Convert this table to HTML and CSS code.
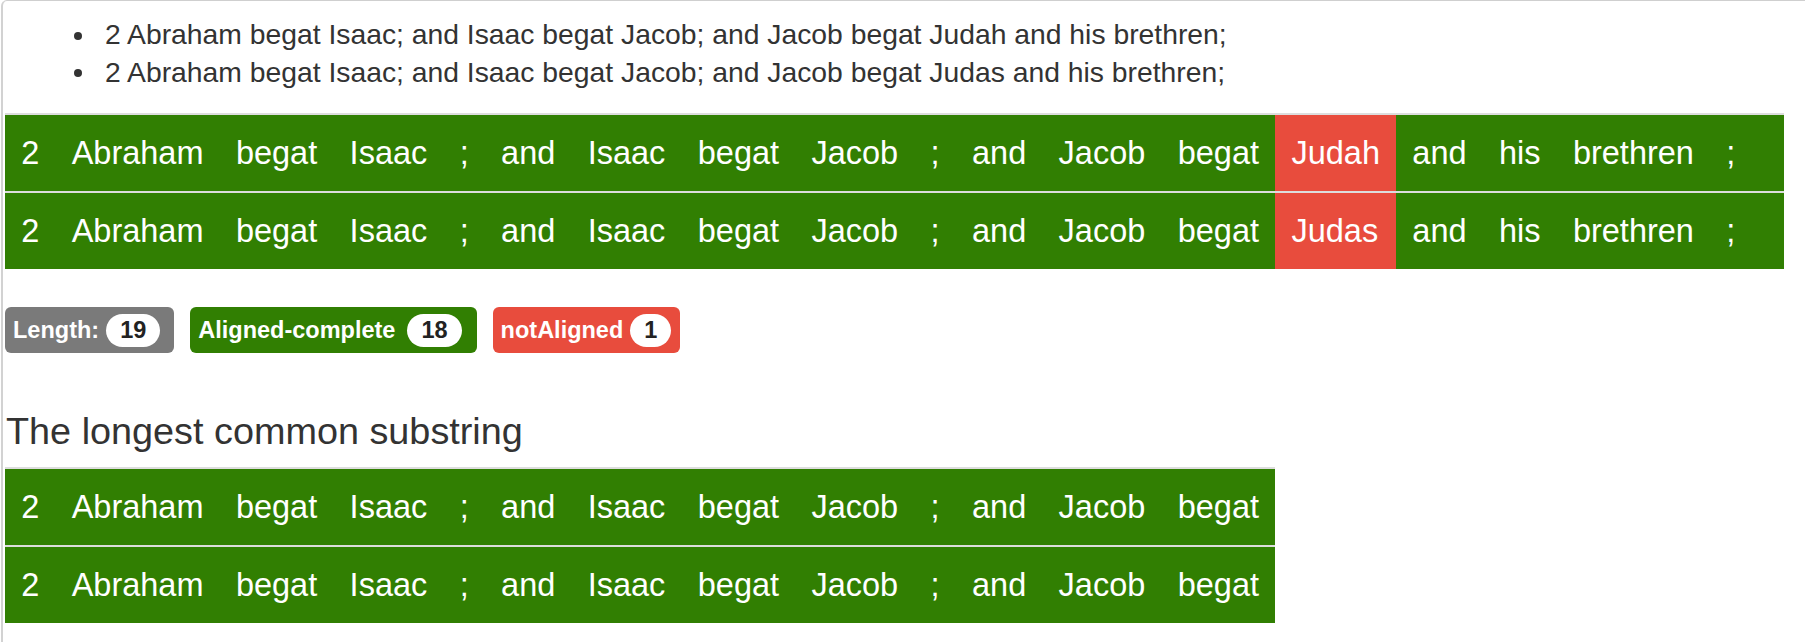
FILE: index.html
```html
<!DOCTYPE html>
<html lang="en">
<head>
<meta charset="utf-8">
<title>Alignment</title>
<link rel="stylesheet" href="styles.css">
</head>
<body>
<div class="frame">
  <ul class="verses">
    <li>2 Abraham begat Isaac; and Isaac begat Jacob; and Jacob begat Judah and his brethren;</li>
    <li>2 Abraham begat Isaac; and Isaac begat Jacob; and Jacob begat Judas and his brethren;</li>
  </ul>

  <table class="align">
    <tr>
      <td>2</td><td>Abraham</td><td>begat</td><td>Isaac</td><td>;</td><td>and</td><td>Isaac</td><td>begat</td><td>Jacob</td><td>;</td><td>and</td><td>Jacob</td><td>begat</td><td class="miss">Judah</td><td>and</td><td>his</td><td>brethren</td><td>;</td><td></td>
    </tr>
    <tr>
      <td>2</td><td>Abraham</td><td>begat</td><td>Isaac</td><td>;</td><td>and</td><td>Isaac</td><td>begat</td><td>Jacob</td><td>;</td><td>and</td><td>Jacob</td><td>begat</td><td class="miss">Judas</td><td>and</td><td>his</td><td>brethren</td><td>;</td><td></td>
    </tr>
  </table>

  <div class="labels">
    <span class="label label-gray">Length: <span class="pill">19</span></span>
    <span class="label label-green">Aligned-complete <span class="pill">18</span></span>
    <span class="label label-red">notAligned <span class="pill">1</span></span>
  </div>

  <h3 class="title">The longest common substring</h3>

  <table class="align">
    <tr>
      <td>2</td><td>Abraham</td><td>begat</td><td>Isaac</td><td>;</td><td>and</td><td>Isaac</td><td>begat</td><td>Jacob</td><td>;</td><td>and</td><td>Jacob</td><td>begat</td>
    </tr>
    <tr>
      <td>2</td><td>Abraham</td><td>begat</td><td>Isaac</td><td>;</td><td>and</td><td>Isaac</td><td>begat</td><td>Jacob</td><td>;</td><td>and</td><td>Jacob</td><td>begat</td>
    </tr>
  </table>
</div>
</body>
</html>
```

FILE: styles.css
```css
html, body {
  margin: 0;
  padding: 0;
  background: #ffffff;
}

body {
  font-family: "Liberation Sans", Arial, Helvetica, sans-serif;
  color: #333333;
}

.frame {
  margin-left: 1px;
  min-height: 642px;
  border-top: 1px solid #cfcfcf;
  border-left: 2px solid #d2d2d2;
  border-top-left-radius: 6px;
  padding-left: 2px;
  box-sizing: border-box;
}

.verses {
  list-style: none;
  margin: 15px 0 22px 0;
  padding: 0 0 0 69px;
  font-size: 28.3px;
  line-height: 37.5px;
}

.verses li {
  white-space: nowrap;
}

.verses li::before {
  content: "";
  display: inline-block;
  width: 8px;
  height: 8px;
  border-radius: 50%;
  background: #333333;
  vertical-align: middle;
  margin-right: 23px;
  position: relative;
  top: -1px;
}

.align {
  border-collapse: collapse;
  border-spacing: 0;
}

.align td {
  background: #317f02;
  color: #ffffff;
  font-size: 32.5px;
  line-height: 45px;
  padding: 16px 16.2px 15px;
  border-top: 2px solid #dddddd;
  white-space: nowrap;
}

.align td.miss {
  background: #e84c3d;
}

.labels {
  display: flex;
  gap: 16px;
  margin-top: 38px;
}

.label {
  display: inline-flex;
  align-items: center;
  gap: 7px;
  height: 46px;
  box-sizing: border-box;
  padding: 0 9px 0 8px;
  border-radius: 6px;
  color: #ffffff;
  font-weight: bold;
  font-size: 23.5px;
  white-space: nowrap;
}

.label-gray {
  background: #7a7a7a;
  padding-right: 14px;
}

.label-green {
  background: #317f02;
  gap: 12px;
  padding-right: 15px;
}

.label-red {
  background: #e84c3d;
}

.pill {
  display: inline-flex;
  align-items: center;
  justify-content: center;
  height: 33px;
  padding: 0 14px;
  border-radius: 17px;
  background: #ffffff;
  color: #222222;
  font-size: 23.5px;
  font-weight: bold;
}

.title {
  margin: 56px 0 14px 1px;
  font-size: 37.8px;
  line-height: 44px;
  font-weight: normal;
  color: #333333;
}
```
